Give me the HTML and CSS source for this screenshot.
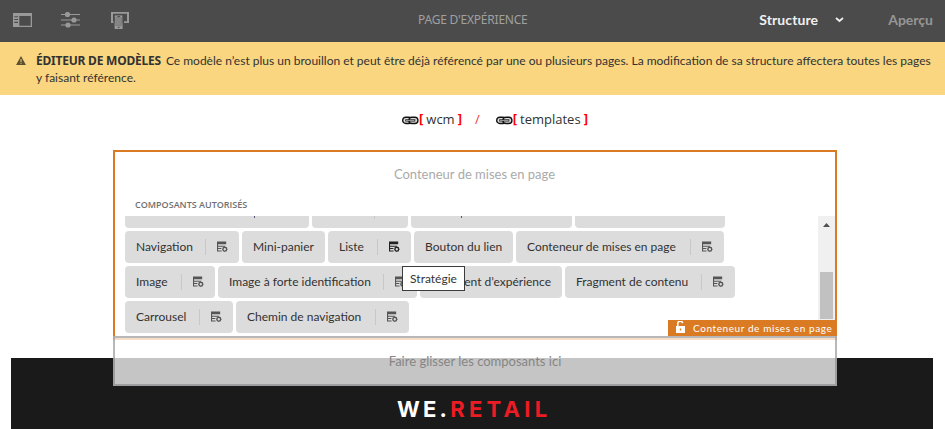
FILE: index.html
```
<!DOCTYPE html>
<html lang="fr">
<head>
<meta charset="utf-8">
<title>Éditeur de modèles</title>
<link rel="stylesheet" href="styles.css">
</head>
<body>
<svg class="defs" aria-hidden="true">
  <symbol id="policy" viewBox="0 0 12 12">
    <path d="M0 0h10v3H0zM0 3h1.2v8H0zM1 4.5h8v1.1H1zM1 7h3.8v1.1H1zM1 9.9h4V11H1z" fill="currentColor"/>
    <circle cx="8.5" cy="8.5" r="2" fill="none" stroke="currentColor" stroke-width="1.4"/>
    <path d="M8.5 5.6v.8M8.5 10.6v.9M5.5 8.5h.9M10.6 8.5h.9M6.4 6.4l.6.6M10.6 6.4l-.6.6M6.4 10.6l.6-.6M10.6 10.6l-.6-.6" stroke="currentColor" stroke-width="1.1"/>
  </symbol>
  <symbol id="link" viewBox="0 0 17 9">
    <rect x=".7" y="1.2" width="9" height="6.3" rx="3.1" fill="#ddd" stroke="#111" stroke-width="1.4"/>
    <rect x="6.9" y="1.2" width="9" height="6.3" rx="3.1" fill="#ddd" stroke="#111" stroke-width="1.4"/>
    <path d="M3.3 4.4h10" stroke="#111" stroke-width="2.2"/>
    <path d="M4 4.4h8.5" stroke="#ccc" stroke-width=".8"/>
  </symbol>
</svg>
<header class="toolbar">
  <div class="tools">
    <svg class="tool panel" viewBox="0 0 19 14"><path fill-rule="evenodd" d="M0 0h19v14H0zM6.3 3v9.7h11.4V3zM1.3 3.2v1.1H5V3.2zM1.3 6v1.1H5V6zM1.3 8.8v1.1H5V8.8z"/></svg>
    <svg class="tool sliders" viewBox="0 0 19 16"><path d="M0 2.5h19M0 8h19M0 13h19" stroke="#999" stroke-width="1.1"/><circle cx="6.5" cy="2.5" r="2.6"/><circle cx="13" cy="8" r="2.6"/><circle cx="7" cy="13" r="2.6"/></svg>
    <svg class="tool devices" viewBox="0 0 18 17"><path d="M0 0h18v11h-5V9.3h3V1.8H2v7.5h1V11H0z"/><path fill-rule="evenodd" d="M3.6 3.2h8V17h-8zM4.8 5.5v8.3h5.6V5.5z"/><path fill="#858585" d="M4.8 5.5h5.6v8.3H4.8z"/><path stroke="#4b4b4b" d="M3.1 11V2.7h9V11M6.3 4.4h2.8M6.8 15.4h1.8" fill="none"/></svg>
  </div>
  <h1 class="page-title">PAGE D'EXPÉRIENCE</h1>
  <nav class="modes">
    <span class="mode-active">Structure</span>
    <svg class="chevron" viewBox="0 0 9 6"><path d="M1 1l3.5 3L8 1" fill="none" stroke="#f0f0f0" stroke-width="1.8"/></svg>
    <span class="mode">Aperçu</span>
  </nav>
</header>
<section class="banner">
  <svg class="alert" viewBox="0 0 11 10"><path d="M5.5 0L11 10H0z" fill="#5c5030"/><path d="M5.5 3.4v3.2M5.5 7.5v1.2" stroke="#fad680" stroke-width="1.1"/></svg>
  <p class="notice"><strong>ÉDITEUR DE MODÈLES</strong>Ce modèle n’est plus un brouillon et peut être déjà référencé par une ou plusieurs pages. La modification de sa structure affectera toutes les pages<br>y faisant référence.</p>
</section>
<nav class="crumbs">
  <svg class="link"><use href="#link"/></svg><b>[</b><span class="crumb">wcm</span><b>]</b>
  <i class="slash">/</i>
  <svg class="link"><use href="#link"/></svg><b>[</b><span class="crumb">templates</span><b>]</b>
</nav>
<main class="container">
  <div class="container-title">Conteneur de mises en page</div>
  <h2 class="allowed">COMPOSANTS AUTORISÉS</h2>
  <div class="scroller">
    <div class="chips">
      <div class="row clipped"><span class="chip w184 descender"><i></i></span><span class="chip w96 divided"><i></i></span><span class="chip w161 descender"><i></i></span><span class="chip w150"></span></div>
      <div class="row">
        <span class="chip w114">Navigation<svg class="policy"><use href="#policy"/></svg></span>
        <span class="chip w83">Mini-panier</span>
        <span class="chip w83">Liste<svg class="policy hover"><use href="#policy"/></svg></span>
        <span class="chip w99">Bouton du lien</span>
        <span class="chip w208">Conteneur de mises en page<svg class="policy"><use href="#policy"/></svg></span>
      </div>
      <div class="row">
        <span class="chip w90">Image<svg class="policy"><use href="#policy"/></svg></span>
        <span class="chip w199">Image à forte identification<svg class="policy"><use href="#policy"/></svg></span>
        <span class="chip w142 right">Fragment d’expérience</span>
        <span class="chip w170">Fragment de contenu<svg class="policy"><use href="#policy"/></svg></span>
      </div>
      <div class="row">
        <span class="chip w108">Carrousel<svg class="policy"><use href="#policy"/></svg></span>
        <span class="chip w173">Chemin de navigation<svg class="policy"><use href="#policy"/></svg></span>
      </div>
    </div>
    <div class="scrollbar"><svg class="up" viewBox="0 0 7 4"><path d="M3.5 0L7 4H0z" fill="#505050"/></svg><div class="thumb"></div></div>
  </div>
  <div class="tooltip">Stratégie</div>
  <div class="badge"><svg class="lock" viewBox="0 0 9 12"><path d="M0 5h9v7H0z" fill="#fff"/><path d="M1.8 5V3a2.3 2.3 0 0 1 4.8-.8" fill="none" stroke="#fff" stroke-width="1.5"/><path d="M4.5 7.5v2" stroke="#da7b24" stroke-width="1.4"/></svg>Conteneur de mises en page</div>
  <div class="dropzone">Faire glisser les composants ici</div>
</main>
<footer class="footer"><span class="brand">WE.<em>RETAIL</em></span></footer>
</body>
</html>
```
FILE: styles.css
```
* { box-sizing: border-box; }
body { margin: 0; height: 429px; overflow: hidden; background: #fff; color: #323232; font: 12px/18px Lato, "Open Sans", sans-serif; }
svg { display: block; flex: none; }
.defs { position: absolute; width: 0; height: 0; }

.toolbar { height: 42px; background: #4b4b4b; display: grid; grid-template-columns: 1fr 110px 1fr; align-items: center; padding: 0 12px 2px 13px; }
.tools { display: flex; align-items: center; }
.tool { fill: #999; }
.panel { width: 19px; height: 14px; }
.sliders { width: 19px; height: 16px; margin: -1px 0 0 29px; }
.devices { width: 18px; height: 17px; margin: 1px 0 0 31px; }
.page-title { margin: 0; font: 400 12px/18px "Noto Sans", sans-serif; letter-spacing: -.22px; color: #a0a0a0; white-space: nowrap; }
.modes { display: flex; align-items: center; justify-content: flex-end; font-size: 14px; font-weight: 700; }
.mode-active { color: #f0f0f0; letter-spacing: .1px; }
.chevron { width: 9px; height: 6px; margin: 0 44px 0 17px; }
.mode { color: #969696; }

.banner { height: 53px; background: #fad680; display: flex; padding: 10px 0 0 16px; }
.alert { width: 10px; height: 9px; margin: 4px 1px 0 0; }
.notice { margin: 0 0 0 9px; line-height: 17px; white-space: nowrap; }
.notice strong { font: 700 12px/16px "Noto Sans", sans-serif; letter-spacing: -.22px; margin-right: 5px; }

.crumbs { height: 55px; display: flex; padding: 15px 0 0 402px; font: 13px/18px "Open Sans", sans-serif; }
.link { width: 17px; height: 9px; margin-top: 6px; }
.crumbs b { color: #f00; line-height: 17px; }
.crumb { margin: 0 3px; }
.slash { color: #e33; font-style: normal; margin: 0 16px 0 13px; }

.container { position: relative; width: 724px; height: 190px; margin-left: 113px; border: 2px solid #da7b24; padding: 14px 0 0 10px; z-index: 1; }
.container-title { font-size: 13px; line-height: 16px; text-align: center; color: #aaa; padding-right: 11px; }
.allowed { margin: 15px 0 0 10px; font: 600 9px/16px "Open Sans", sans-serif; color: #707070; }
.scroller { display: flex; justify-content: space-between; margin-top: 3px; height: 104px; }
.chips { display: flex; flex-direction: column; gap: 3px; }
.row { display: flex; gap: 3px; height: 32px; flex: none; }
.chip { height: 32px; border-radius: 4px; background: #dcdcdc; padding: 0 11px; display: flex; align-items: center; justify-content: space-between; white-space: nowrap; flex: none; }
.clipped { height: 12px; }
.clipped .chip { height: 12px; border-radius: 0 0 4px 4px; align-items: flex-start; }
.descender i { width: 1px; height: 2px; margin-left: 118px; background: #557; }
.w161.descender i { margin-left: 39px; }
.divided i { width: 1px; height: 3px; margin-left: 51px; background: #c8c8c8; }
.right { justify-content: flex-end; }
.policy { width: 23px; height: 16px; padding: 2px 0 2px 11px; border-left: 1px solid #c8c8c8; color: #555; overflow: visible; }
.hover { color: #222; }
.w83 { width: 83px; } .w90 { width: 90px; } .w96 { width: 96px; } .w99 { width: 99px; }
.w108 { width: 108px; } .w114 { width: 114px; } .w142 { width: 142px; } .w150 { width: 150px; }
.w161 { width: 161px; } .w170 { width: 170px; } .w173 { width: 173px; } .w184 { width: 184px; }
.w199 { width: 199px; } .w208 { width: 208px; }
.scrollbar { width: 17px; background: #f0f0f0; padding: 7px 2px 1px; display: flex; flex-direction: column; justify-content: space-between; }
.up { width: 7px; height: 4px; margin-left: 3px; }
.thumb { width: 13px; height: 47px; background: #c1c1c1; }
.tooltip { position: absolute; left: 287px; top: 114px; width: 63px; height: 25px; border: 1px solid #3c3c3c; background: #fff; line-height: 23px; text-align: center; }
.badge { position: absolute; right: -2px; bottom: 2px; width: 169px; height: 16px; background: #da7b24; color: #fff; display: flex; align-items: center; padding-left: 8px; font-size: 10px; line-height: 16px; letter-spacing: .59px; white-space: nowrap; }
.lock { width: 9px; height: 12px; margin: -2px 8px 0 0; }
.dropzone { position: absolute; left: -2px; top: 184px; width: 724px; height: 50px; border: 2px solid rgba(125, 125, 130, .55); background: rgba(255, 255, 255, .75); color: #858585; font-size: 13px; line-height: 46px; text-align: center; }

.footer { height: 71px; margin: 18px 12px 0 11px; background: #1a1a1a; padding: 36px 0 0 386px; }
.brand { display: block; font: 700 22px/30px Inter, sans-serif; letter-spacing: 3.2px; color: #fff; }
.brand em { font-style: normal; color: #ec1c24; letter-spacing: 4.3px; }
```
